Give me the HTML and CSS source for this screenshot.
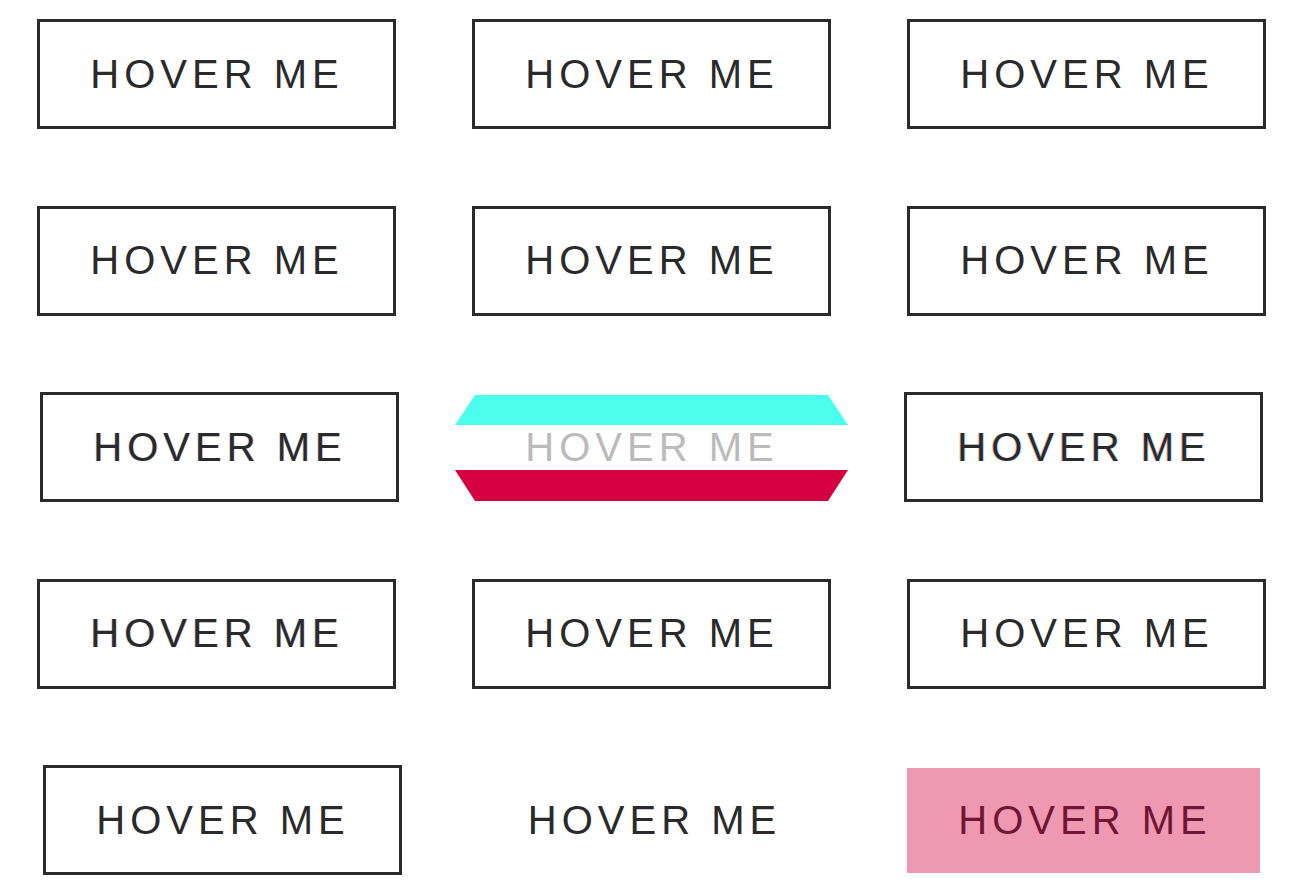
FILE: index.html
```html
<!DOCTYPE html>
<html>
<head>
<meta charset="utf-8">
<link rel="stylesheet" href="styles.css">
</head>
<body>
<div class="grid">
  <div class="btn">HOVER ME</div>
  <div class="btn">HOVER ME</div>
  <div class="btn">HOVER ME</div>

  <div class="btn">HOVER ME</div>
  <div class="btn">HOVER ME</div>
  <div class="btn">HOVER ME</div>

  <div class="btn shift-right glitch-a">HOVER ME</div>
  <div class="stripes">
    <div class="band band-top"></div>
    <div class="stripe-text">HOVER ME</div>
    <div class="band band-bottom"></div>
  </div>
  <div class="btn shift-left glitch-b">HOVER ME</div>

  <div class="btn glitch-a">HOVER ME</div>
  <div class="btn">HOVER ME</div>
  <div class="btn">HOVER ME</div>

  <div class="btn shift-right2">HOVER ME</div>
  <div class="btn plain">HOVER ME</div>
  <div class="btn pink">HOVER ME</div>
</div>
</body>
</html>
```

FILE: styles.css
```css
html, body {
  margin: 0;
  padding: 0;
  background: #fff;
}

.grid {
  display: grid;
  grid-template-columns: repeat(3, 359px);
  grid-auto-rows: 110px;
  column-gap: 76px;
  row-gap: 76.5px;
  padding: 19px 0 0 37px;
}

.btn {
  box-sizing: border-box;
  width: 359px;
  height: 110px;
  border: 3px solid #2a2a2a;
  display: flex;
  align-items: center;
  justify-content: center;
  font-family: "Liberation Sans", Arial, sans-serif;
  font-size: 40px;
  letter-spacing: 5px;
  padding-left: 1px;
  color: #2a2a2a;
}

.shift-right { transform: translateX(3px); }
.shift-left { transform: translateX(-3px); }
.shift-right2 { transform: translateX(6px); }

.glitch-a {
  text-shadow: -1px 0 rgba(0, 140, 255, 0.25), 1px 0 rgba(255, 60, 0, 0.2);
}
.glitch-b {
  text-shadow: -1px 0 rgba(200, 0, 0, 0.3), 1px 0 rgba(0, 140, 255, 0.25);
}

.plain {
  border-color: transparent;
  padding-left: 6px;
}

.pink {
  border: none;
  width: 353px;
  height: 105px;
  margin-top: 3px;
  background: #ee99b1;
  color: #6e1634;
  padding-left: 3px;
}

.stripes {
  width: 393px;
  height: 105px;
  margin: 3px 0 0 -17px;
  display: flex;
  flex-direction: column;
}

.band {
  flex: none;
}
.band-top {
  height: 30px;
  background: #4bffec;
  clip-path: polygon(20px 0, 373px 0, 393px 100%, 0 100%);
}
.band-bottom {
  height: 31px;
  background: #d4003f;
  clip-path: polygon(0 0, 393px 0, 373px 100%, 20px 100%);
}

.stripe-text {
  flex: 1;
  display: flex;
  align-items: center;
  justify-content: center;
  font-family: "Liberation Sans", Arial, sans-serif;
  font-size: 40px;
  letter-spacing: 5px;
  padding-left: 1px;
  color: #bbbbbb;
}
```
